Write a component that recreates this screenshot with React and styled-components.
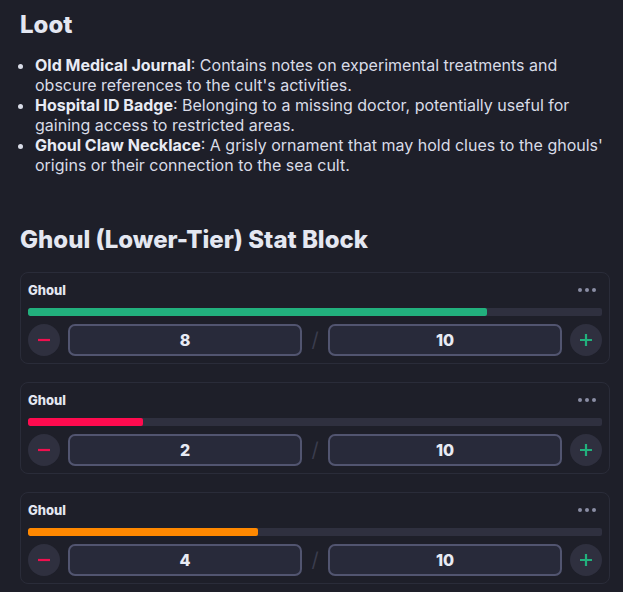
import React from "react";
import styled, { createGlobalStyle } from "styled-components";

const GlobalStyle = createGlobalStyle`
    html, body {
        margin: 0;
        padding: 0;
        background: #1e1f29;
    }
    body {
        font-family: Inter, "Noto Sans", sans-serif;
        color: #d9dce7;
    }
`;

const Page = styled.div`
    padding: 10px 13px 20px 20px;
`;

const Heading = styled.h2`
    margin: ${(props) => props.$top || 0}px 0 0 0;
    font-size: 24px;
    line-height: 30px;
    font-weight: 800;
    color: #e4e7f1;
`;

const List = styled.ul`
    margin: 15px 0 0 0;
    padding-left: 15px;
    font-size: 16px;
    line-height: 20px;

    strong {
        color: #e8ebf4;
        font-weight: 700;
    }
`;

const Cards = styled.div`
    margin-top: 17px;
    display: flex;
    flex-direction: column;
    gap: 18px;
`;

const Card = styled.div`
    border: 1px solid #2a2c39;
    border-radius: 8px;
    padding: 7px;
    display: flex;
    flex-direction: column;
    gap: 8px;
`;

const CardHeader = styled.div`
    height: 20px;
    display: flex;
    align-items: center;
    justify-content: space-between;
`;

const Name = styled.span`
    font-size: 13px;
    font-weight: 800;
    color: #e4e7f1;
`;

const Dots = styled.span`
    display: flex;
    gap: 3px;
    margin-right: 6px;

    i {
        width: 4px;
        height: 4px;
        border-radius: 50%;
        background: #8a8da3;
    }
`;

const Track = styled.div`
    height: 8px;
    border-radius: 2px;
    background: #2f303f;
    overflow: hidden;
`;

const Fill = styled.div`
    height: 100%;
    border-radius: 2px;
    background: ${(props) => props.color};
`;

const Controls = styled.div`
    display: flex;
    align-items: center;
    gap: 8px;
`;

const RoundButton = styled.button`
    flex: none;
    width: 32px;
    height: 32px;
    border-radius: 50%;
    border: none;
    background: #2f303f;
    display: flex;
    align-items: center;
    justify-content: center;
    padding: 0;
    cursor: pointer;
`;

const Value = styled.div`
    flex: 1;
    height: 32px;
    box-sizing: border-box;
    border: 2px solid #525570;
    border-radius: 7px;
    background: #282a3a;
    display: flex;
    align-items: center;
    justify-content: center;
    font-size: 16px;
    font-weight: 800;
    color: #e8ebf4;
`;

const Slash = styled.span`
    width: 10px;
    text-align: center;
    font-size: 20px;
    color: #3a3c4d;
    font-weight: 400;
`;

const monsters = [
    { hp: 8, max: 10, color: "#22b07d" },
    { hp: 2, max: 10, color: "#ff0b4f" },
    { hp: 4, max: 10, color: "#ff8800" },
];

function MonsterCard({ hp, max, color }) {
    return (
        <Card>
            <CardHeader>
                <Name>Ghoul</Name>
                <Dots>
                    <i />
                    <i />
                    <i />
                </Dots>
            </CardHeader>
            <Track>
                <Fill color={color} style={{ width: `${(hp / max) * 100}%` }} />
            </Track>
            <Controls>
                <RoundButton aria-label="decrease">
                    <svg width="14" height="14" viewBox="0 0 14 14">
                        <path d="M1 7h12" stroke="#f0104f" strokeWidth="2.2" />
                    </svg>
                </RoundButton>
                <Value>{hp}</Value>
                <Slash>/</Slash>
                <Value>{max}</Value>
                <RoundButton aria-label="increase">
                    <svg width="14" height="14" viewBox="0 0 14 14">
                        <path d="M1 7h12M7 1v12" stroke="#22b07d" strokeWidth="2.2" />
                    </svg>
                </RoundButton>
            </Controls>
        </Card>
    );
}

export default function App() {
    return (
        <Page>
            <GlobalStyle />
            <Heading>Loot</Heading>
            <List>
                <li>
                    <strong>Old Medical Journal</strong>: Contains notes on
                    experimental treatments and obscure references to the
                    cult's activities.
                </li>
                <li>
                    <strong>Hospital ID Badge</strong>: Belonging to a missing
                    doctor, potentially useful for gaining access to restricted
                    areas.
                </li>
                <li>
                    <strong>Ghoul Claw Necklace</strong>: A grisly ornament
                    that may hold clues to the ghouls' origins or their
                    connection to the sea cult.
                </li>
            </List>
            <Heading $top={50}>Ghoul (Lower-Tier) Stat Block</Heading>
            <Cards>
                {monsters.map((m, i) => (
                    <MonsterCard key={i} {...m} />
                ))}
            </Cards>
        </Page>
    );
}
